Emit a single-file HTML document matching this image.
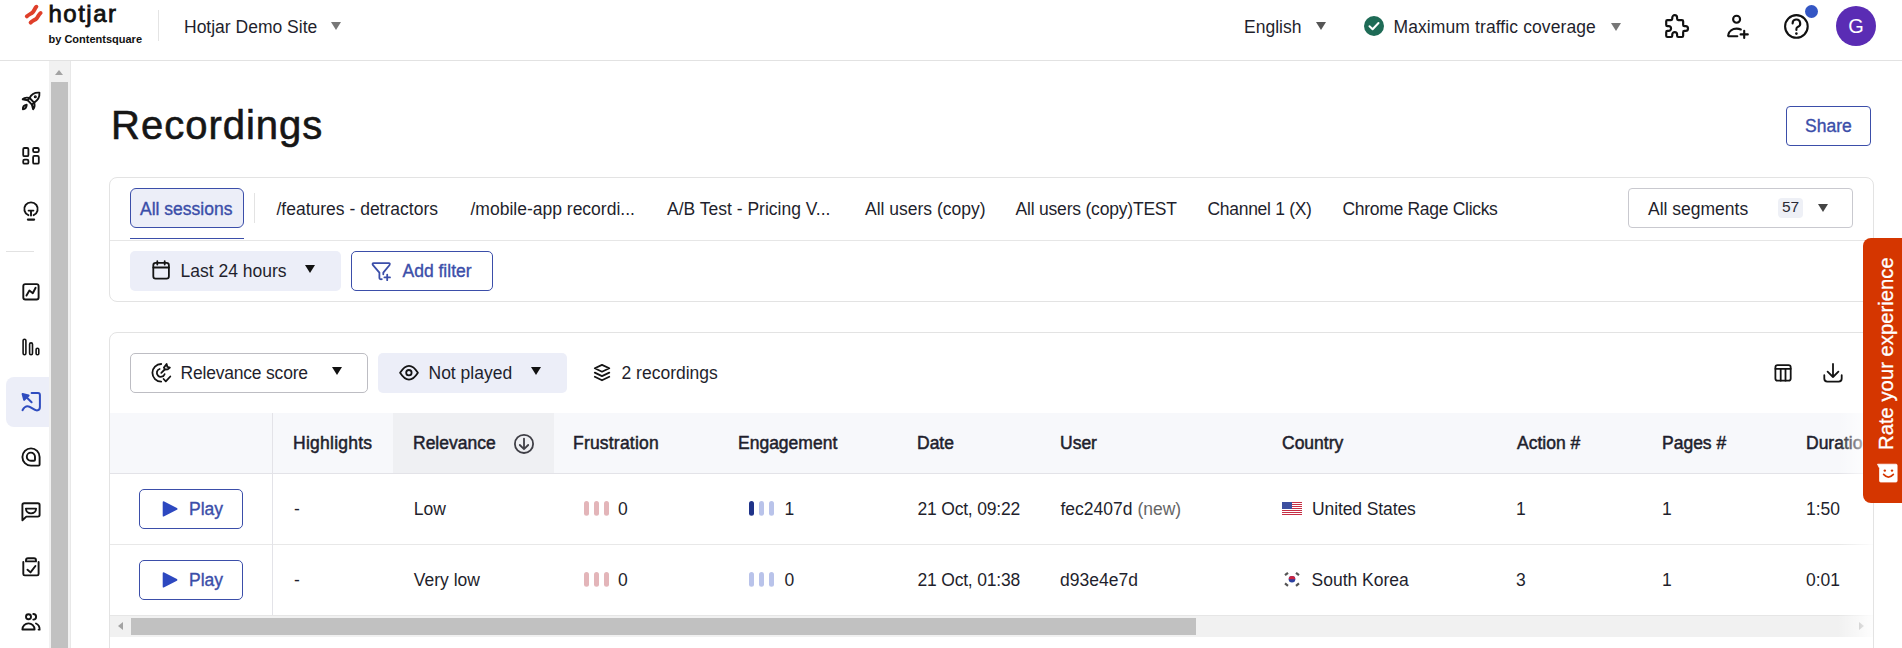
<!DOCTYPE html>
<html><head><meta charset="utf-8">
<style>
*{box-sizing:border-box;margin:0;padding:0}
html,body{width:1902px;height:648px;overflow:hidden;background:#fff;font-family:"Liberation Sans",sans-serif;color:#1f1f2d}
.a{position:absolute}
.t{position:absolute;white-space:nowrap;font-size:17.5px;line-height:20px}
.m{-webkit-text-stroke:0.35px currentColor}
.h{-webkit-text-stroke:0.5px currentColor}
.blue{color:#3b4ea9}
svg{position:absolute;overflow:visible}
.ic{fill:none;stroke:#1a1a1a;stroke-width:2;stroke-linecap:round;stroke-linejoin:round}
.caret{position:absolute;width:0;height:0;border-left:5.5px solid transparent;border-right:5.5px solid transparent;border-top:8px solid #1a1a1a}
</style></head><body>

<!-- HEADER -->
<div class="a" style="left:0;top:60px;width:1902px;height:1px;background:#e2e2e2"></div>

<!-- logo -->
<svg style="left:0;top:0" width="60" height="40" viewBox="0 0 60 40">
  <path d="M26.8 16.4 C28.6 14.4 31.2 13.9 32.9 12.1 C34.4 10.5 34.8 8.3 36.4 6.7" stroke="#df3f2a" stroke-width="3.9" fill="none" stroke-linecap="round"/>
  <path d="M30.6 22.6 C32.4 20.6 35 20.1 36.7 18.3 C38.2 16.7 38.6 14.5 40.6 13" stroke="#df3f2a" stroke-width="3.9" fill="none" stroke-linecap="round"/>
</svg>
<div class="t" style="left:48.5px;top:-0.7px;font-size:24px;line-height:30px;font-weight:400;letter-spacing:1.5px;-webkit-text-stroke:0.8px #111;color:#111">hotjar</div>
<div class="t" style="left:48.5px;top:32px;font-size:11px;line-height:14px;font-weight:700;color:#111">by Contentsquare</div>
<div class="a" style="left:158px;top:10px;width:1px;height:31px;background:#e4e4e4"></div>

<div class="t" style="left:184px;top:16.8px">Hotjar Demo Site</div>
<div class="caret" style="left:331px;top:22px;border-top-color:#777"></div>

<div class="t" style="left:1244px;top:16.8px">English</div>
<div class="caret" style="left:1315.5px;top:22px;border-top-color:#555"></div>

<svg style="left:1364px;top:16px" width="20" height="20" viewBox="0 0 20 20"><circle cx="10" cy="10" r="10" fill="#1e6b56"/><path d="M5.5 10.3 L8.6 13.2 L14.5 7" stroke="#fff" stroke-width="2" fill="none" stroke-linecap="round" stroke-linejoin="round"/></svg>
<div class="t" style="left:1393.5px;top:16.8px;letter-spacing:0.1px">Maximum traffic coverage</div>
<div class="caret" style="left:1610.5px;top:22.5px;border-top-color:#777"></div>

<!-- puzzle -->
<svg style="left:1665.4px;top:14.2px" width="23" height="23" viewBox="2 2 19 19"><path fill="none" stroke="#111" stroke-width="1.8" stroke-linecap="round" stroke-linejoin="round" d="M4 7h3a1 1 0 0 0 1 -1v-1a2 2 0 0 1 4 0v1a1 1 0 0 0 1 1h3a1 1 0 0 1 1 1v3a1 1 0 0 0 1 1h1a2 2 0 0 1 0 4h-1a1 1 0 0 0 -1 1v3a1 1 0 0 1 -1 1h-3a1 1 0 0 1 -1 -1v-1a2 2 0 0 0 -4 0v1a1 1 0 0 1 -1 1h-3a1 1 0 0 1 -1 -1v-3a1 1 0 0 1 1 -1h1a2 2 0 0 0 0 -4h-1a1 1 0 0 1 -1 -1v-3a1 1 0 0 1 1 -1"/></svg>
<!-- add user -->
<svg style="left:0;top:0" width="1902" height="60" viewBox="0 0 1902 60"><g fill="none" stroke="#111" stroke-width="2.1" stroke-linecap="round" stroke-linejoin="round">
<circle cx="1736.6" cy="19.2" r="3.5"/>
<path d="M1737.3 36.3 H1729.3 Q1727.9 36.3 1728.2 35 C1729 31 1732.5 28.6 1736.6 28.6 C1738.2 28.6 1739.6 28.9 1740.8 29.5"/>
<path d="M1744.2 30.8 V38 M1740.6 34.4 H1747.8"/>
<circle cx="1796.4" cy="26.4" r="11.3"/>
<path d="M1792.6 23.4 A3.8 3.8 0 1 1 1797.7 26.9 Q1796.4 27.6 1796.4 29 V30"/>
</g><circle cx="1796.4" cy="33.6" r="1.3" fill="#111"/></svg>
<div class="a" style="left:1805px;top:5px;width:13px;height:13px;border-radius:50%;background:#3456c4"></div>
<div class="a" style="left:1836px;top:6px;width:40px;height:40px;border-radius:50%;background:#5a2cb4"></div>
<div class="t" style="left:1836px;width:40px;text-align:center;top:15px;font-size:20px;line-height:22px;color:#fff">G</div>

<!-- SIDEBAR -->
<div class="a" style="left:49px;top:61px;width:22px;height:587px;background:#f1f1f1;border-right:1px solid #e8e8e8"></div>
<div class="a" style="left:51px;top:82px;width:17px;height:566px;background:#c1c1c1"></div>
<div class="a" style="left:54.8px;top:70px;width:0;height:0;border-left:4.7px solid transparent;border-right:4.7px solid transparent;border-bottom:5px solid #a3a3a3"></div>
<div class="a" style="left:6px;top:251px;width:28px;height:1px;background:#e2e2e2"></div>
<div class="a" style="left:6px;top:377px;width:43px;height:50px;background:#eceef8;border-radius:8px 0 0 8px"></div>

<svg style="left:0;top:0" width="49" height="648" viewBox="0 0 49 648"><g fill="none" stroke="#141414" stroke-width="1.9" stroke-linecap="round" stroke-linejoin="round">
<!-- rocket -->
<path d="M29.6 98 C31.5 94 34.5 92.3 39.4 92.7 C39.8 97.2 38 100.3 34.1 102.6 Z"/>
<path d="M29.6 98 L27.6 100.1 L31.9 104.6 L34.1 102.6"/>
<path d="M29.2 97.9 C26.5 97.4 24 97.8 22.7 99.2 L27.6 100.3"/>
<path d="M34.3 103 C34.9 105.7 34.4 108 33.1 109.2 L31.9 104.6"/>
<path d="M22.9 109.3 C22.7 106.8 24.1 105.2 26.7 104.8 C26.5 107.3 25.2 108.9 22.9 109.3 Z"/>
<circle cx="35.3" cy="96.7" r="0.6" fill="#141414"/>
<!-- grid -->
<rect x="23.2" y="148" width="5.2" height="8.2" rx="1.3" stroke-width="1.8"/>
<rect x="23.2" y="159.6" width="5.2" height="4.1" rx="1.3" stroke-width="1.8"/>
<rect x="33.1" y="148" width="5.7" height="4.1" rx="1.3" stroke-width="1.8"/>
<rect x="33.1" y="155.9" width="5.7" height="7.8" rx="1.3" stroke-width="1.8"/>
<!-- bulb -->
<path d="M28.4 215.2 A6.7 6.7 0 1 1 33.6 215.2"/>
<path d="M28.6 210.6 H33.4 M31 210.6 V215.6"/>
<path d="M27.9 219.6 H34.1" stroke-width="2.2"/>
<!-- chart -->
<rect x="23.3" y="284.1" width="15.3" height="15.4" rx="2"/>
<path d="M26.5 295.6 L29.4 290.6 L32.8 293.2 L35.6 287.8"/>
<!-- bars -->
<rect x="23.1" y="339.2" width="2.8" height="15.5" rx="1.4" stroke-width="1.6"/>
<rect x="29.6" y="342.9" width="2.9" height="11.8" rx="1.4" stroke-width="1.6"/>
<rect x="36.1" y="348.2" width="2.7" height="6.5" rx="1.3" stroke-width="1.6"/>
<!-- at -->
<path d="M39.6 457 A8.6 8.6 0 1 0 31 465.6 H38.6 Q39.6 465.6 39.6 464.6 Z"/>
<path d="M35 456.7 A4.1 4.1 0 1 0 30.9 460.8 H34 Q35 460.8 35 459.8 Z"/>
<!-- chat -->
<path d="M22.4 520.3 V505 Q22.4 503.2 24.2 503.2 H37.8 Q39.6 503.2 39.6 505 V514.8 Q39.6 516.6 37.8 516.6 H26.3 Z"/>
<path d="M25.9 508.6 H36.1 A5.1 4.8 0 0 1 25.9 508.6 Z"/>
<!-- clipboard -->
<path d="M23.3 562 V574 Q23.3 575.4 24.8 575.4 H37.1 Q38.6 575.4 38.6 574 V562"/>
<path d="M26 561.4 V560.2 Q26 558.2 28 558.2 H34 Q36 558.2 36 560.2 V561.4 Z"/>
<path d="M27.5 569.7 L30.5 572.4 L35.4 566"/>
<!-- users -->
<circle cx="28.5" cy="616.8" r="2.5"/>
<path d="M33.3 614 A2.8 2.8 0 0 1 33.3 619.6"/>
<path d="M22.4 629.5 A6.1 6.1 0 0 1 34.6 629.5 Z"/>
<path d="M36 623.5 C38.4 624.6 39.7 627 39.6 629.6 H38.6"/>
</g>
<!-- recordings active -->
<g fill="none" stroke="#2f4cbf" stroke-width="2" stroke-linecap="round" stroke-linejoin="round">
<path d="M31.6 393 H38 Q39.9 393 39.9 395 V407.3 Q39.9 410.4 37 410.4 C33.3 410.4 30.8 406.2 27.6 406.2 C25 406.2 23.5 408.2 22.5 410.2"/>
<path d="M31.6 402.2 L26.5 397.2"/>
<path d="M22.6 394 L28.6 395.5 L24.2 399.9 Z" fill="#2f4cbf"/>
</g>
</svg>
<!-- MAIN -->
<div class="t" style="left:111px;top:102.3px;font-size:40px;line-height:46px;color:#161616;letter-spacing:1px;-webkit-text-stroke:0.6px #161616">Recordings</div>
<div class="a" style="left:1786px;top:106px;width:85px;height:40px;border:1.5px solid #3b4ea9;border-radius:4px"></div>
<div class="t blue m" style="left:1805px;top:116px">Share</div>

<!-- card 1 -->
<div class="a" style="left:109px;top:177px;width:1765px;height:125px;border:1px solid #e3e3e3;border-radius:8px"></div>
<div class="a" style="left:110px;top:240px;width:1763px;height:1px;background:#e6e6e6"></div>
<div class="a" style="left:130px;top:188px;width:114px;height:40px;border:1.5px solid #3b4ea9;border-radius:6px;background:#eceef8"></div>
<div class="t blue m" style="left:140px;top:198.7px">All sessions</div>
<div class="a" style="left:130px;top:237.5px;width:114px;height:1.6px;background:#3b4ea9"></div>
<div class="a" style="left:254px;top:193px;width:1px;height:30px;background:#e3e3e3"></div>
<div class="t" style="left:276.5px;top:198.7px">/features - detractors</div>
<div class="t" style="left:470.5px;top:198.7px">/mobile-app recordi...</div>
<div class="t" style="left:667px;top:198.7px">A/B Test - Pricing V...</div>
<div class="t" style="left:865px;top:198.7px">All users (copy)</div>
<div class="t" style="left:1015.5px;top:198.7px;letter-spacing:-0.2px">All users (copy)TEST</div>
<div class="t" style="left:1207.5px;top:198.7px;letter-spacing:-0.3px">Channel 1 (X)</div>
<div class="t" style="left:1342.5px;top:198.7px;letter-spacing:-0.3px">Chrome Rage Clicks</div>

<div class="a" style="left:1628px;top:188px;width:225px;height:40px;border:1px solid #c9c9cf;border-radius:4px"></div>
<div class="t" style="left:1648px;top:198.7px">All segments</div>
<div class="a" style="left:1778px;top:198px;width:25px;height:20px;background:#eef0f6;border-radius:4px"></div>
<div class="t" style="left:1778px;width:25px;text-align:center;top:197px;font-size:15.5px;color:#2a2a35">57</div>
<div class="caret" style="left:1817.5px;top:204px;border-left-width:5px;border-right-width:5px;border-top-width:8px;border-top-color:#444"></div>

<div class="a" style="left:130px;top:251px;width:211px;height:39.5px;background:#eceef8;border-radius:5px"></div>
<div class="t" style="left:180.5px;top:260.8px">Last 24 hours</div>
<div class="caret" style="left:304.5px;top:265px;border-top-color:#111"></div>
<div class="a" style="left:351px;top:251px;width:142px;height:39.5px;border:1.5px solid #3b4ea9;border-radius:5px"></div>
<div class="t blue m" style="left:402.5px;top:260.8px">Add filter</div>

<!-- card 2 -->
<div class="a" style="left:109px;top:332px;width:1765px;height:330px;border:1px solid #e3e3e3;border-radius:8px"></div>
<div class="a" style="left:130px;top:353px;width:238px;height:40px;border:1px solid #bdbdc3;border-radius:5px"></div>
<div class="t" style="left:180.5px;top:362.8px;letter-spacing:-0.2px">Relevance score</div>
<div class="caret" style="left:331.5px;top:367px;border-top-color:#111"></div>
<div class="a" style="left:378px;top:353px;width:189px;height:40px;background:#eceef8;border-radius:5px"></div>
<div class="t" style="left:428.5px;top:362.8px">Not played</div>
<div class="caret" style="left:531px;top:367px;border-top-color:#111"></div>
<div class="t" style="left:621.5px;top:362.8px">2 recordings</div>

<!-- table -->
<div class="a" style="left:110px;top:413px;width:1763px;height:60px;background:#f7f8fb"></div>
<div class="a" style="left:393px;top:413px;width:161px;height:60px;background:#eff0f3"></div>
<div class="a" style="left:110px;top:473px;width:1763px;height:1px;background:#e3e3e8"></div>
<div class="a" style="left:110px;top:544px;width:1763px;height:1px;background:#e8e8e8"></div>
<div class="a" style="left:272px;top:413px;width:1px;height:202px;background:#e3e3e8"></div>

<div class="t h" style="left:293px;top:432.6px;letter-spacing:0.25px">Highlights</div>
<div class="t h" style="left:413px;top:432.6px">Relevance</div>
<div class="t h" style="left:573px;top:432.6px;letter-spacing:0.2px">Frustration</div>
<div class="t h" style="left:738px;top:432.6px">Engagement</div>
<div class="t h" style="left:917px;top:432.6px">Date</div>
<div class="t h" style="left:1060px;top:432.6px">User</div>
<div class="t h" style="left:1282px;top:432.6px">Country</div>
<div class="t h" style="left:1517px;top:432.6px">Action #</div>
<div class="t h" style="left:1662px;top:432.6px">Pages #</div>
<div class="t h" style="left:1806px;top:432.6px">Duration</div>

<!-- rows -->
<div class="a" style="left:139px;top:489px;width:104px;height:40px;border:1.5px solid #3b4ea9;border-radius:5px"></div>
<div class="t blue m" style="left:189px;top:498.9px">Play</div>
<div class="t" style="left:294px;top:498.9px">-</div>
<div class="t" style="left:413.8px;top:498.9px">Low</div>
<div class="t" style="left:618px;top:498.9px">0</div>
<div class="t" style="left:784.5px;top:498.9px">1</div>
<div class="t" style="left:917.5px;top:498.9px;letter-spacing:-0.2px">21 Oct, 09:22</div>
<div class="t" style="left:1060.5px;top:498.9px">fec2407d <span style="color:#666">(new)</span></div>
<div class="t" style="left:1312px;top:498.9px;letter-spacing:-0.1px">United States</div>
<div class="t" style="left:1516px;top:498.9px">1</div>
<div class="t" style="left:1662px;top:498.9px">1</div>
<div class="t" style="left:1806px;top:498.9px">1:50</div>

<div class="a" style="left:139px;top:560px;width:104px;height:40px;border:1.5px solid #3b4ea9;border-radius:5px"></div>
<div class="t blue m" style="left:189px;top:569.9px">Play</div>
<div class="t" style="left:294px;top:569.9px">-</div>
<div class="t" style="left:413.8px;top:569.9px">Very low</div>
<div class="t" style="left:618px;top:569.9px">0</div>
<div class="t" style="left:784.5px;top:569.9px">0</div>
<div class="t" style="left:917.5px;top:569.9px;letter-spacing:-0.2px">21 Oct, 01:38</div>
<div class="t" style="left:1060px;top:569.9px">d93e4e7d</div>
<div class="t" style="left:1311.5px;top:569.9px">South Korea</div>
<div class="t" style="left:1516px;top:569.9px">3</div>
<div class="t" style="left:1662px;top:569.9px">1</div>
<div class="t" style="left:1806px;top:569.9px">0:01</div>

<svg style="left:0;top:0" width="1902" height="648" viewBox="0 0 1902 648">
<g fill="none" stroke="#141414" stroke-width="1.8" stroke-linecap="round" stroke-linejoin="round">
<!-- calendar -->
<rect x="153.3" y="262.8" width="15.6" height="15.8" rx="2.4"/>
<path d="M153.3 267.5 H168.9 M157.3 261.2 V264.6 M164.7 261.2 V264.6"/>
<!-- relevance -->
<path d="M161.2 364 A8.8 8.8 0 0 0 161.2 381.6"/>
<path d="M159.6 369 A4 4 0 1 0 164.6 374.2"/>
<path d="M161.3 372.8 L164.2 370"/>
<path d="M166.6 364 L167.3 366.8 L169.9 367.5 L167.7 369.4 L165 369.5 L163.9 367.6 Z"/>
<path d="M163.6 379 L165.8 381.3 L170.3 376.5"/>
<!-- eye -->
<path d="M400.1 372.8 Q404.5 365.9 409 365.9 Q413.5 365.9 417.9 372.8 Q413.5 379.7 409 379.7 Q404.5 379.7 400.1 372.8 Z"/>
<circle cx="408.9" cy="372.7" r="2.7"/>
<!-- layers -->
<path d="M594.8 368.3 L602 364.9 L609.3 368.3 L602 371.7 Z"/>
<path d="M594.8 372.6 L602 376.1 L609.3 372.6 M594.8 376.8 L602 380.3 L609.3 376.8"/>
<!-- columns -->
<rect x="1775.4" y="365.2" width="15.3" height="15.5" rx="2.2"/>
<path d="M1775.4 368.8 H1790.7 M1780.7 368.8 V380.7 M1785.5 368.8 V380.7"/>
<!-- download -->
<path d="M1833 364 V377 M1827.6 371.6 L1833 377 L1838.4 371.6"/>
<path d="M1824.3 375.2 V378.6 Q1824.3 381.6 1827.3 381.6 H1838.7 Q1841.7 381.6 1841.7 378.6 V375.2"/>
</g>
<!-- filter -->
<g fill="none" stroke="#3b4ea9" stroke-width="1.8" stroke-linecap="round" stroke-linejoin="round">
<path d="M383.3 274.3 V272.6 L389.4 265.2 Q390.6 263.2 388.6 263.2 H373.7 Q371.8 263.2 373 265.2 L379.4 272.6 V277.8 Q379.4 279.6 381.8 279.2"/>
<path d="M387.2 274.6 V280.2 M384.4 277.4 H390"/>
</g>
<!-- sort -->
<g fill="none" stroke="#3f3f46" stroke-width="1.8" stroke-linecap="round" stroke-linejoin="round">
<circle cx="524" cy="443.9" r="9.1"/>
<path d="M524 438.6 V449 M519.8 445 L524 449.2 L528.2 445"/>
</g>
<!-- play -->
<path d="M164.2 501.5 Q162.7 500.7 162.7 502.4 V515.4 Q162.7 517.2 164.2 516.3 L176.9 509.8 Q178.2 508.9 176.9 508 Z" fill="#2d48c0"/>
<path d="M164.2 572.5 Q162.7 571.7 162.7 573.4 V586.4 Q162.7 588.2 164.2 587.3 L176.9 580.8 Q178.2 579.9 176.9 579 Z" fill="#2d48c0"/>
<!-- frustration bars -->
<g fill="#e3b5b9">
<rect x="584" y="501" width="5" height="14.8" rx="2.5"/><rect x="594" y="501" width="5" height="14.8" rx="2.5"/><rect x="604" y="501" width="5" height="14.8" rx="2.5"/>
<rect x="584" y="572" width="5" height="14.8" rx="2.5"/><rect x="594" y="572" width="5" height="14.8" rx="2.5"/><rect x="604" y="572" width="5" height="14.8" rx="2.5"/>
</g>
<g fill="#b9c3ea">
<rect x="759" y="501" width="5" height="14.8" rx="2.5"/><rect x="769" y="501" width="5" height="14.8" rx="2.5"/>
<rect x="749" y="572" width="5" height="14.8" rx="2.5"/><rect x="759" y="572" width="5" height="14.8" rx="2.5"/><rect x="769" y="572" width="5" height="14.8" rx="2.5"/>
</g>
<rect x="749" y="501" width="5" height="14.8" rx="2.5" fill="#1f3389"/>
<!-- US flag -->
<rect x="1282" y="502" width="20" height="13" fill="#fff"/>
<g fill="#c62f45"><rect x="1282" y="502" width="20" height="1"/><rect x="1282" y="504" width="20" height="1"/><rect x="1282" y="506" width="20" height="1"/><rect x="1282" y="508" width="20" height="1"/><rect x="1282" y="510" width="20" height="1"/><rect x="1282" y="512" width="20" height="1"/><rect x="1282" y="514" width="20" height="1"/></g>
<rect x="1282" y="502" width="10" height="7" fill="#3d4f9f"/>
<!-- KR flag -->
<circle cx="1292" cy="579.3" r="3.3" fill="#2b40a0"/>
<path d="M1288.7 579.3 A3.3 3.3 0 0 1 1295.3 579.3 Z" fill="#cd2340"/>
<g stroke="#555" stroke-width="2.2">
<path d="M1285 575.2 L1288 572.8 M1296 572.8 L1299 575.2 M1285 583.4 L1288 585.8 M1296 585.8 L1299 583.4"/>
</g>
</svg>
<!-- fade right -->
<div class="a" style="left:1838px;top:413px;width:35px;height:224px;background:linear-gradient(to right,rgba(255,255,255,0),rgba(255,255,255,0.9));z-index:2"></div>

<!-- h scrollbar -->
<div class="a" style="left:110px;top:615px;width:1763px;height:22px;background:#f1f1f1;border-top:1px solid #e6e6e6"></div>
<div class="a" style="left:131px;top:618px;width:1065px;height:17px;background:#c1c1c1"></div>
<div class="a" style="left:118px;top:622px;width:0;height:0;border-top:4.5px solid transparent;border-bottom:4.5px solid transparent;border-right:5px solid #a3a3a3"></div>
<div class="a" style="left:1859px;top:622px;width:0;height:0;border-top:4.5px solid transparent;border-bottom:4.5px solid transparent;border-left:5px solid #a3a3a3"></div>

<!-- rate tab -->
<div class="a" style="left:1863px;top:238px;width:45px;height:265px;background:#d53600;border-radius:8px 0 0 8px;z-index:3"></div>
<div class="t" style="left:1791px;top:344px;width:190px;font-size:20.3px;line-height:22px;color:#fff;transform:rotate(-90deg);text-align:center;z-index:4;-webkit-text-stroke:0.3px #fff">Rate your experience</div>
<svg style="left:1866px;top:455px;z-index:4" width="36" height="36" viewBox="1866 455 36 36">
<path d="M1877.5 464.2 H1896 Q1897.1 464.2 1897.1 465.3 V480.9 Q1897.1 482 1896 482 H1880.7 Q1879.6 482 1879.6 480.9 V468.3 Z" fill="#fff" stroke="#fff" stroke-width="0.8" stroke-linejoin="round"/>
<circle cx="1884.8" cy="470.6" r="1.2" fill="#d53600"/><circle cx="1892" cy="470.6" r="1.2" fill="#d53600"/>
<path d="M1883.6 474.4 Q1888.4 479.8 1893.4 474.4" fill="none" stroke="#d53600" stroke-width="1.6" stroke-linecap="round"/>
</svg>

</body></html>
